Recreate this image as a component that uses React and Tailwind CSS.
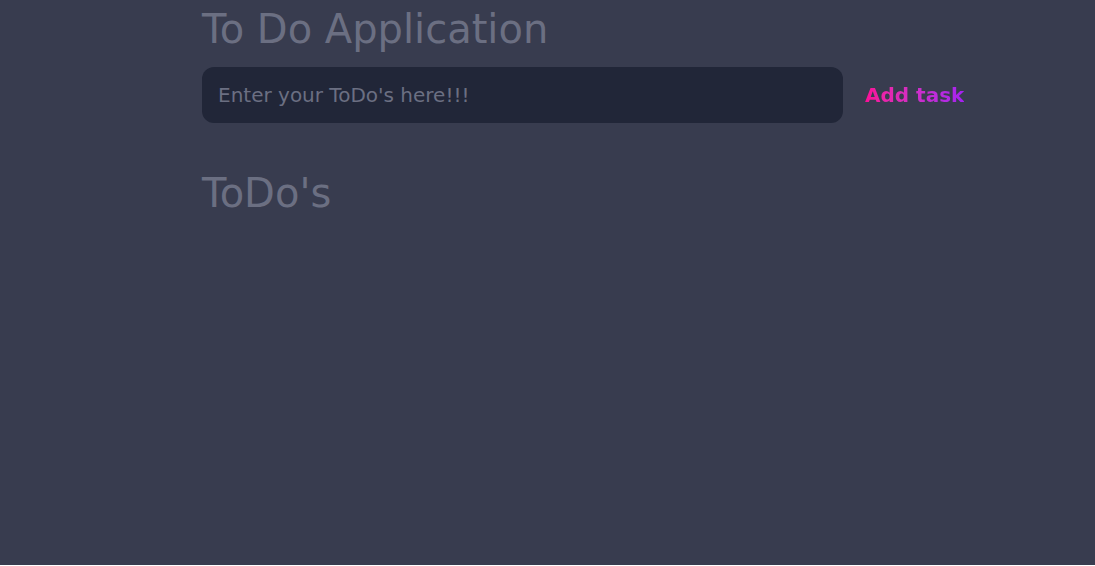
import { useState } from 'react';

export default function App() {
  const [task, setTask] = useState('');

  return (
    <div className="min-h-screen bg-[#383c4f] font-['DejaVu_Sans',sans-serif]">
      <div className="ml-[202px]">
        <h1 className="-mt-[1px] text-[40px] leading-normal text-[#6b6f82]">To Do Application</h1>
        <div className="mt-[8px] flex items-center gap-[22px]">
          <input
            value={task}
            onChange={e => setTask(e.target.value)}
            placeholder="Enter your ToDo's here!!!"
            className="h-[56px] w-[641px] rounded-xl bg-[#212638] px-4 text-xl text-[#c0c3cf] placeholder:text-[#6b6f82] outline-none"
          />
          <button className="bg-linear-to-r from-[#fb0c98] to-[#a51ff2] bg-clip-text text-xl font-bold text-transparent">
            Add task
          </button>
        </div>
        <h2 className="mt-[40px] text-[40px] leading-normal text-[#6b6f82]">ToDo's</h2>
      </div>
    </div>
  );
}
